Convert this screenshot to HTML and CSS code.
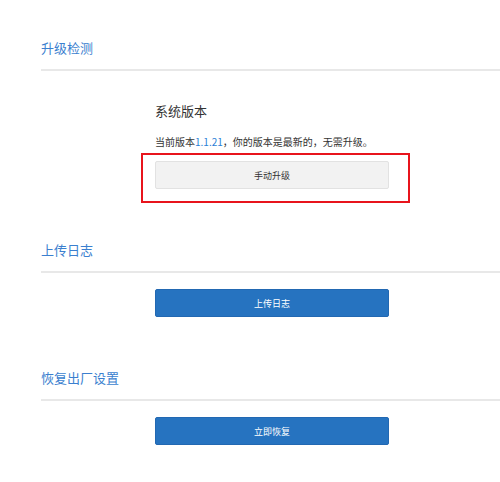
FILE: index.html
```html
<!DOCTYPE html>
<html lang="zh-CN">
<head>
<meta charset="utf-8">
<title>系统设置</title>
<link rel="stylesheet" href="styles.css">
</head>
<body>
<div class="page">
  <section class="section">
    <h2 class="section-title">升级检测</h2>
    <div class="section-body upgrade-body">
      <h3 class="sub-title">系统版本</h3>
      <p class="desc">当前版本<span class="ver">1.1.21</span>，你的版本是最新的，无需升级。</p>
      <div class="btn-wrap">
        <button class="btn btn-default">手动升级</button>
        <span class="highlight"></span>
      </div>
    </div>
  </section>
  <section class="section">
    <h2 class="section-title">上传日志</h2>
    <div class="section-body">
      <button class="btn btn-primary">上传日志</button>
    </div>
  </section>
  <section class="section">
    <h2 class="section-title">恢复出厂设置</h2>
    <div class="section-body">
      <button class="btn btn-primary">立即恢复</button>
    </div>
  </section>
</div>
</body>
</html>
```
FILE: styles.css
```css
html, body {
  margin: 0;
  padding: 0;
  background: #fff;
}
body {
  font-family: "Noto Sans CJK SC", "Noto Sans", sans-serif;
  color: #333;
}
.page {
  padding: 39px 0 0 41px;
}
.section {
  margin-bottom: 52px;
}
.section-title {
  margin: 0;
  font-size: 13px;
  line-height: 18px;
  font-weight: normal;
  color: #3b7fcf;
  padding-bottom: 12px;
  border-bottom: 2px solid #e8e8e8;
}
.section-body {
  padding: 16px 0 0 114px;
}
.upgrade-body {
  padding-top: 31px;
}
.sub-title {
  margin: 0;
  font-size: 13px;
  line-height: 18px;
  font-weight: normal;
  color: #333;
}
.desc {
  margin: 15px 0 4px;
  font-size: 10px;
  line-height: 14px;
  color: #333;
}
.ver {
  color: #2b7fd6;
}
.btn-wrap {
  position: relative;
  width: 234px;
  margin-top: 12px;
}
.btn {
  display: block;
  width: 234px;
  height: 28px;
  margin: 0;
  padding: 0;
  font-family: "Noto Sans CJK SC", "Noto Sans", sans-serif;
  font-size: 9px;
  border-radius: 2px;
  cursor: pointer;
}
.btn-default {
  background: #f2f2f2;
  border: 1px solid #e2e2e2;
  color: #333;
}
.btn-primary {
  background: #2673c0;
  border: 1px solid #2268b2;
  color: #fff;
}
.highlight {
  position: absolute;
  left: -14px;
  top: -8px;
  right: -21px;
  bottom: -14px;
  border: 2px solid #e8141c;
  pointer-events: none;
}
```
